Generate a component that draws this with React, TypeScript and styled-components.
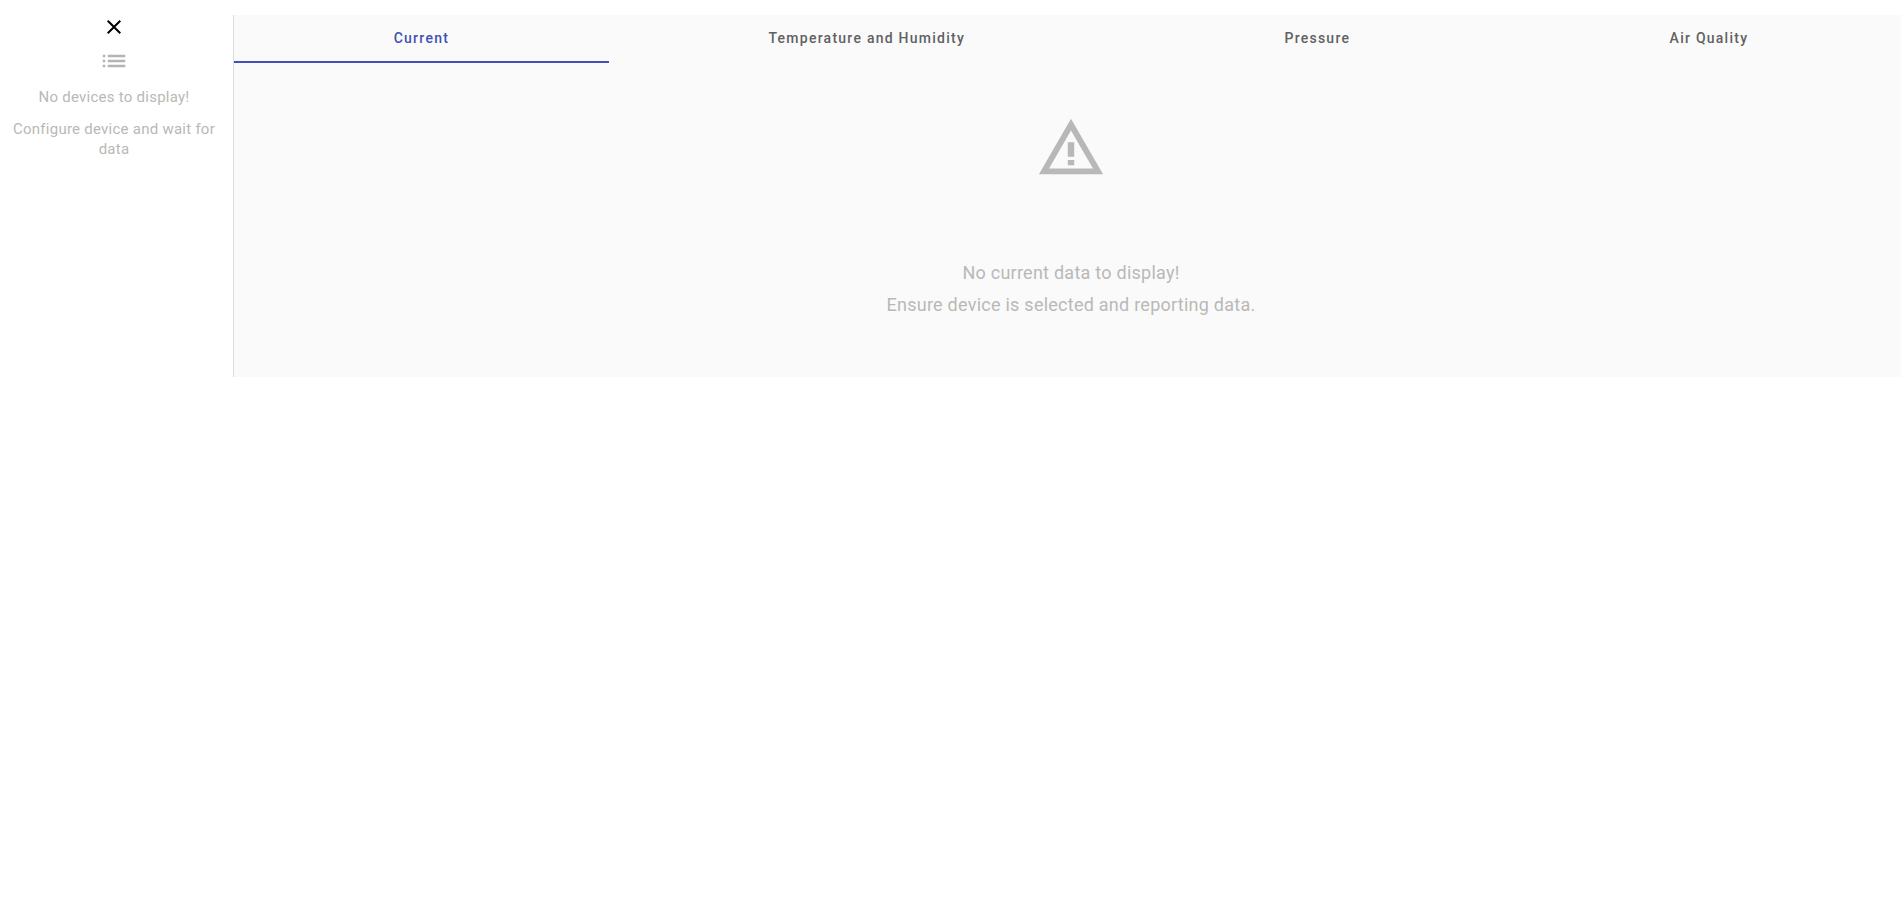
import React from 'react';
import styled, { createGlobalStyle } from 'styled-components';

const GlobalStyle = createGlobalStyle`
    html, body {
        margin: 0;
        padding: 0;
        background: #ffffff;
        overflow: hidden;
    }

    body {
        font-family: Roboto, "Liberation Sans", sans-serif;
    }
`;

const Page = styled.div`
    display: grid;
    grid-template-columns: 234px 1674px;
    height: 362px;
    margin-top: 15px;
`;

const Sidebar = styled.aside`
    border-right: 1px solid #dddddd;
    padding-right: 5px;
`;

const SidebarContent = styled.div`
    padding: 0 10px;
    text-align: center;
`;

const IconButton = styled.div`
    display: flex;
    justify-content: center;
    height: 24px;
    color: #000000;
`;

const ListIcon = styled.div`
    display: flex;
    justify-content: center;
    margin-top: 7px;
    height: 30px;
    color: #b4b4b4;
`;

const SideText = styled.p<{ $top: number }>`
    margin: ${props => props.$top}px 0 0;
    font-size: 15px;
    line-height: 20px;
    letter-spacing: 0.25px;
    color: #bab8b6;
`;

const Main = styled.main`
    background: #fafafa;
`;

const TabBar = styled.nav`
    display: flex;
    height: 48px;
`;

const Tab = styled.div<{ $active?: boolean }>`
    flex: 0 0 auto;
    box-sizing: border-box;
    height: 48px;
    padding: 0 159.7px;
    display: flex;
    align-items: center;
    font-size: 14px;
    font-weight: 500;
    letter-spacing: 1.25px;
    color: ${props => props.$active ? '#3f51b5' : '#616161'};
    border-bottom: 2px solid ${props => props.$active ? '#3f51b5' : 'transparent'};
`;

const Empty = styled.section`
    display: flex;
    flex-direction: column;
    align-items: center;
    padding-top: 50px;
`;

const EmptyIcon = styled.div`
    height: 70px;
    color: #b8b8b8;
`;

const EmptyText = styled.p<{ $top: number }>`
    margin: ${props => props.$top}px 0 0;
    font-size: 18px;
    line-height: 32px;
    letter-spacing: 0.25px;
    color: #bab8b6;
`;

const tabs = ['Current', 'Temperature and Humidity', 'Pressure', 'Air Quality'];

export default function App() {
    return (
        <>
            <GlobalStyle />
            <Page>
                <Sidebar>
                    <SidebarContent>
                        <IconButton>
                            <svg width="24" height="24" viewBox="0 0 24 24" fill="currentColor">
                                <path d="M19 6.41L17.59 5 12 10.59 6.41 5 5 6.41 10.59 12 5 17.59 6.41 19 12 13.41 17.59 19 19 17.59 13.41 12z" />
                            </svg>
                        </IconButton>
                        <ListIcon>
                            <svg width="30" height="30" viewBox="0 0 24 24" fill="currentColor">
                                <path d="M3 13h2v-2H3v2zm0 4h2v-2H3v2zm0-8h2V7H3v2zm4 4h14v-2H7v2zm0 4h14v-2H7v2zM7 7v2h14V7H7z" />
                            </svg>
                        </ListIcon>
                        <SideText $top={11}>No devices to display!</SideText>
                        <SideText $top={12}>Configure device and wait for data</SideText>
                    </SidebarContent>
                </Sidebar>
                <Main>
                    <TabBar>
                        {tabs.map((tab, i) => (
                            <Tab key={tab} $active={i === 0}>{tab}</Tab>
                        ))}
                    </TabBar>
                    <Empty>
                        <EmptyIcon>
                            <svg width="70" height="70" viewBox="0 0 24 24" fill="currentColor">
                                <path d="M1 21h22L12 2 1 21zm3.47-2L12 5.99 19.53 19H4.47zM10.9 16.1h2.2v1.8h-2.2zm0-6.1h2.2v5h-2.2z" />
                            </svg>
                        </EmptyIcon>
                        <EmptyText $top={74}>No current data to display!</EmptyText>
                        <EmptyText $top={0}>Ensure device is selected and reporting data.</EmptyText>
                    </Empty>
                </Main>
            </Page>
        </>
    );
}
